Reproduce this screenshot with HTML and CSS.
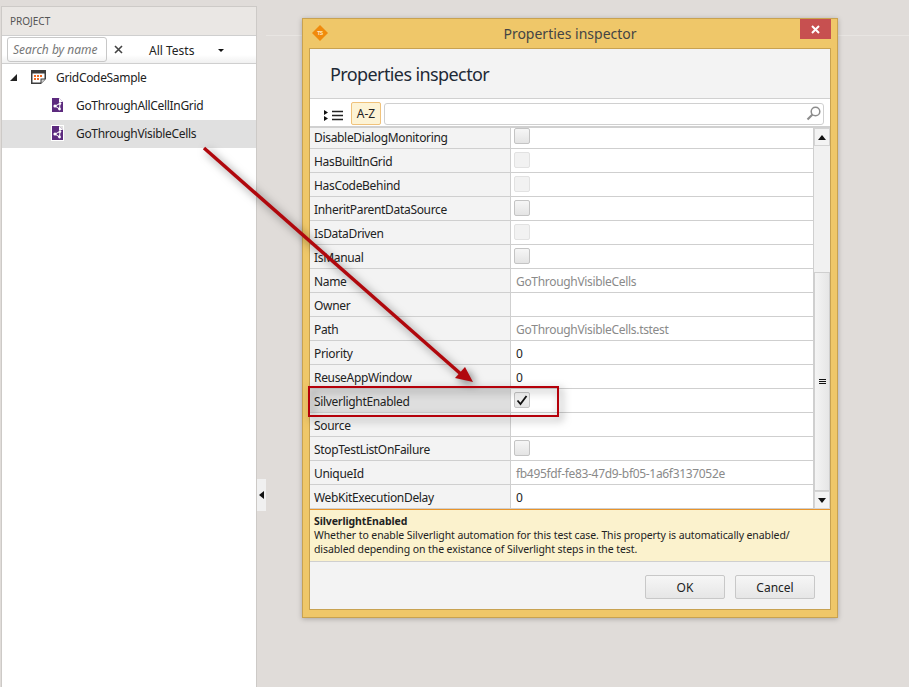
FILE: index.html
```html
<!DOCTYPE html>
<html lang="en">
  <head>
    <meta charset="UTF-8" />
    <title>Properties inspector</title>
    <link rel="stylesheet" href="styles.css">
  </head>
  <body>
    <div class="app">
      <aside class="project">
        <div class="project-head">PROJECT</div>
        <div class="filter">
          <div class="search-name">Search by name</div>
          <svg class="clear" width="9" height="9" viewBox="0 0 9 9"><path d="M1 1l7 7M8 1L1 8" stroke="#444" stroke-width="1.6" fill="none"/></svg>
          <div class="all-tests">All Tests</div>
          <div class="caret"></div>
        </div>
        <div class="tree-row root">
          <svg class="twist" width="9" height="9" viewBox="0 0 9 9"><path d="M8 1v7H1z" fill="#222"/></svg>
          <svg class="file-icon" width="15" height="14" viewBox="0 0 15 14">
            <path d="M0 0h15v9l-5 5H0z" fill="#3d3d3d"/>
            <path d="M1.500 3.500h12v5h-4v4h-8z" fill="#fff"/>
            <path d="M3 5h2v2H3zM6 5h2v2H6zM9 5h2v2H9zM3 8h2v2H3zM6 8h2v2H6z" fill="#f26a21"/>
            <path d="M10.500 13l3.500-3.500h-3.500z" fill="#cfcfcf"/>
          </svg>
          <span>GridCodeSample</span>
        </div>
        <div class="tree-row leaf">
          <svg class="file-icon" width="11" height="14" viewBox="0 0 11 14">
            <path d="M0 0h7l4 4v10H0z" fill="#5c2a7e"/>
            <path d="M7 0l4 4H7z" fill="#fff"/>
            <path d="M3 8L8 5.500 7.500 11z" stroke="#fff" stroke-width="1" fill="none"/>
            <circle cx="3" cy="8" r="1.600" fill="#fff"/><circle cx="8" cy="5.500" r="1.300" fill="#fff"/><circle cx="7.500" cy="11" r="1.400" fill="#fff"/>
          </svg>
          <span>GoThroughAllCellInGrid</span>
        </div>
        <div class="tree-row leaf selected">
          <svg class="file-icon framed" width="11" height="14" viewBox="0 0 11 14">
            <path d="M0 0h7l4 4v10H0z" fill="#5c2a7e"/>
            <path d="M7 0l4 4H7z" fill="#fff"/>
            <path d="M3 8L8 5.500 7.500 11z" stroke="#fff" stroke-width="1" fill="none"/>
            <circle cx="3" cy="8" r="1.600" fill="#fff"/><circle cx="8" cy="5.500" r="1.300" fill="#fff"/><circle cx="7.500" cy="11" r="1.400" fill="#fff"/>
          </svg>
          <span>GoThroughVisibleCells</span>
        </div>
      </aside>

      <div class="splitter">
        <div class="split-tab"><div class="split-arrow"></div></div>
      </div>

      <main class="workspace">
        <section class="dialog">
          <header class="titlebar">
            <svg class="logo" width="18" height="18" viewBox="0 0 18 18">
              <path d="M9 1l8 8-8 8-8-8z" fill="#f08a0c"/>
              <text x="9" y="11" text-anchor="middle" font-size="5" font-weight="bold" fill="#ffe9c4" font-family="Liberation Sans, sans-serif">TS</text>
            </svg>
            <div class="title">Properties inspector</div>
            <div class="close">
              <svg width="9" height="9" viewBox="0 0 9 9"><path d="M1 1l7 7M8 1L1 8" stroke="#fff" stroke-width="2" fill="none"/></svg>
            </div>
          </header>

          <div class="client">
            <div class="client-head">Properties inspector</div>

            <div class="toolbar">
              <svg class="sort-icon" width="19" height="11" viewBox="0 0 19 11">
                <path d="M0 0l4 2.500L0 5zM0 6l4 2.500L0 11z" fill="#111"/>
                <path d="M8 1.500h11M8 5.500h11M8 9.500h11" stroke="#222" stroke-width="1.500" fill="none"/>
              </svg>
              <div class="az">A-Z</div>
              <div class="filter-box">
                <svg width="15" height="15" viewBox="0 0 15 15">
                  <circle cx="9.500" cy="5.500" r="4.300" stroke="#8c8c8c" stroke-width="1.500" fill="none"/>
                  <path d="M6.500 8.500L1.500 13.500" stroke="#8c8c8c" stroke-width="2.200" fill="none"/>
                </svg>
              </div>
            </div>

            <div class="grid">
              <div class="rows">
                <div class="row"><div class="key">DisableDialogMonitoring</div><div class="val"><div class="check"></div></div></div>
                <div class="row"><div class="key">HasBuiltInGrid</div><div class="val"><div class="check off"></div></div></div>
                <div class="row"><div class="key">HasCodeBehind</div><div class="val"><div class="check off"></div></div></div>
                <div class="row"><div class="key">InheritParentDataSource</div><div class="val"><div class="check"></div></div></div>
                <div class="row"><div class="key">IsDataDriven</div><div class="val"><div class="check off"></div></div></div>
                <div class="row"><div class="key">IsManual</div><div class="val"><div class="check"></div></div></div>
                <div class="row"><div class="key">Name</div><div class="val muted">GoThroughVisibleCells</div></div>
                <div class="row"><div class="key">Owner</div><div class="val"></div></div>
                <div class="row"><div class="key">Path</div><div class="val muted">GoThroughVisibleCells.tstest</div></div>
                <div class="row"><div class="key">Priority</div><div class="val">0</div></div>
                <div class="row"><div class="key">ReuseAppWindow</div><div class="val">0</div></div>
                <div class="row current"><div class="key">SilverlightEnabled</div><div class="val"><div class="check">
                  <svg width="12" height="11" viewBox="0 0 12 11"><path d="M1.500 5.500l3 3.500 6-8" stroke="#111" stroke-width="1.800" fill="none"/></svg>
                </div></div></div>
                <div class="row"><div class="key">Source</div><div class="val"></div></div>
                <div class="row"><div class="key">StopTestListOnFailure</div><div class="val"><div class="check"></div></div></div>
                <div class="row"><div class="key">UniqueId</div><div class="val muted">fb495fdf-fe83-47d9-bf05-1a6f3137052e</div></div>
                <div class="row"><div class="key">WebKitExecutionDelay</div><div class="val">0</div></div>
              </div>
              <div class="scrollbar">
                <div class="sb-btn"><div class="tri-up"></div></div>
                <div class="sb-track"></div>
                <div class="sb-thumb"><div class="grip"></div></div>
                <div class="sb-btn"><div class="tri-down"></div></div>
              </div>
            </div>

            <div class="describe">
              <div class="describe-name">SilverlightEnabled</div>
              <div>Whether to enable Silverlight automation for this test case. This property is automatically enabled/<br>disabled depending on the existance of Silverlight steps in the test.</div>
            </div>

            <div class="actions">
              <div class="btn">OK</div>
              <div class="btn">Cancel</div>
            </div>
          </div>
        </section>
      </main>
    </div>

    <!-- callout drawn over the screenshot -->
    <svg class="callout" width="909" height="687" viewBox="0 0 909 687">
      <path d="M204 148L462 375" stroke="#b0080d" stroke-width="3.500" fill="none"/>
      <path d="M473 382L455 378 465 367z" fill="#b0080d"/>
      <rect x="309" y="387" width="249" height="29" stroke="#b5000a" stroke-width="2" fill="none"/>
    </svg>
  </body>
</html>
```

FILE: styles.css
```css
* {
  box-sizing: border-box;
}

body {
  margin: 0;
  background-color: #e0dcd9;
  font-family: "Noto Sans", sans-serif;
  font-size: 12px;
  letter-spacing: -0.32px;
  color: #222;
  overflow: hidden;
}

.app {
  display: flex;
  height: 687px;
  padding-left: 1px;
}

/* left tree */
.project {
  width: 256px;
  margin-top: 6px;
  background-color: #fff;
  border: 1px solid #cdcac7;
  border-bottom: none;
}

.project-head {
  height: 29px;
  padding: 0 8px;
  display: flex;
  align-items: center;
  background-color: #eae7e4;
  border-bottom: 1px solid #cfcfcf;
  font-size: 10px;
  letter-spacing: 0;
  color: #555;
}

.filter {
  height: 28px;
  display: flex;
  align-items: center;
  border-bottom: 1px solid #cfcfcf;
  background: linear-gradient(#fff 70%, #f0f0f0);
}

.search-name {
  width: 100px;
  height: 25px;
  margin-left: 5px;
  padding-left: 5px;
  line-height: 24px;
  border: 1px solid #c8c8c8;
  border-radius: 3px;
  font-style: italic;
  letter-spacing: 0;
  color: #777;
  white-space: nowrap;
}

.clear {
  margin-left: 7px;
}

.all-tests {
  margin: 2px 0 0 26px;
  width: 69px;
  letter-spacing: 0;
  color: #222;
}

.caret {
  width: 0;
  height: 0;
  margin-top: 2px;
  border-left: 3px solid transparent;
  border-right: 3px solid transparent;
  border-top: 3px solid #111;
}

.tree-row {
  height: 28px;
  display: flex;
  align-items: center;
  padding-bottom: 2px;
}

.tree-row.root {
  padding-left: 7px;
}

.twist {
  margin-right: 13px;
}

.tree-row.root .file-icon {
  margin-right: 10px;
}

.tree-row.leaf {
  padding-left: 50px;
}

.tree-row.leaf .file-icon {
  margin-right: 13px;
}

.selected {
  background-color: #e0e0e0;
}

.framed {
  outline: 1px solid #fff;
}

/* splitter */
.splitter {
  width: 9px;
  display: flex;
  flex-direction: column;
  justify-content: flex-end;
  padding-bottom: 176px;
}

.split-tab {
  height: 32px;
  display: flex;
  align-items: center;
  padding-left: 2px;
  background-color: #f0f0f0;
}

.split-arrow {
  width: 0;
  height: 0;
  border-top: 4px solid transparent;
  border-bottom: 4px solid transparent;
  border-right: 5px solid #111;
}

/* dialog */
.workspace {
  flex: 1;
  padding: 18px 0 0 36px;
  background: linear-gradient(#e8e5e2, #e8e5e2) no-repeat 0 35px / 100% 1px;
}

.dialog {
  width: 536px;
  height: 600px;
  display: flex;
  flex-direction: column;
  padding: 0 6px 7px;
  background-color: #efc769;
  border: 1px solid #c8a251;
  box-shadow: 0 1px 5px rgba(0, 0, 0, 0.25);
}

.titlebar {
  height: 29px;
  flex-shrink: 0;
  position: relative;
  display: flex;
  align-items: center;
  justify-content: center;
}

.logo {
  position: absolute;
  left: 2px;
  top: 5px;
}

.title {
  font-size: 14px;
  letter-spacing: 0;
  color: #444;
}

.close {
  position: absolute;
  right: 0;
  top: 0;
  width: 31px;
  height: 20px;
  display: flex;
  align-items: center;
  justify-content: center;
  background-color: #c75050;
}

.client {
  flex: 1;
  display: flex;
  flex-direction: column;
  background-color: #f3f3f3;
  border: 1px solid #c8a251;
}

.client-head {
  height: 50px;
  padding-left: 20px;
  display: flex;
  align-items: center;
  font-size: 18px;
  letter-spacing: -0.6px;
  color: #1e2a36;
  border-bottom: 1px solid #d0d0d0;
}

.toolbar {
  height: 29px;
  display: flex;
  align-items: center;
  padding: 2px 6px 0 14px;
  background-color: #fff;
  border-bottom: 2px solid #d0d0d0;
}

.sort-icon {
  margin: 3px 8px 0 0;
}

.az {
  width: 30px;
  height: 23px;
  margin-right: 3px;
  display: flex;
  align-items: center;
  justify-content: center;
  background-color: #fdf3d5;
  border: 1px solid #f0c27b;
  border-radius: 2px;
  letter-spacing: 0;
}

.filter-box {
  flex: 1;
  height: 22px;
  display: flex;
  align-items: center;
  justify-content: flex-end;
  padding-right: 2px;
  border: 1px solid #d0d0d0;
  border-radius: 3px;
}

.grid {
  height: 381px;
  display: flex;
  overflow: hidden;
  background-color: #fff;
}

.rows {
  flex: 1;
  margin-top: -3px;
}

.row {
  height: 24px;
  display: flex;
  border-bottom: 1px solid #cfcfcf;
}

.key {
  width: 201px;
  padding-left: 4px;
  line-height: 25px;
  background-color: #f3f3f3;
  border-right: 1px solid #cfcfcf;
  white-space: nowrap;
}

.current .key {
  background-color: #dedede;
}

.val {
  flex: 1;
  display: flex;
  align-items: center;
  padding: 1px 0 0 5px;
}

.muted {
  color: #8a8a8a;
}

.check {
  width: 16px;
  height: 16px;
  margin: -2px 0 0 -2px;
  display: flex;
  align-items: center;
  justify-content: center;
  background: linear-gradient(#f6f6f6, #e4e4e4);
  border: 1px solid #c4c4c4;
  border-radius: 2px;
}

.check.off {
  background: #f2f2f2;
  border-color: #e2e2e2;
}

.scrollbar {
  width: 17px;
  display: flex;
  flex-direction: column;
  background-color: #f1f1f1;
  border-left: 1px solid #cfcfcf;
}

.sb-btn {
  height: 18px;
  display: flex;
  align-items: center;
  justify-content: center;
  background-color: #f3f3f3;
  border: 1px solid #d4d4d4;
}

.sb-track {
  flex: 1;
}

.sb-thumb {
  height: 219px;
  display: flex;
  align-items: center;
  justify-content: center;
  background: linear-gradient(90deg, #f4f4f4, #e6e6e6);
  border: 1px solid #cfcfcf;
}

.grip {
  width: 7px;
  height: 5px;
  border-top: 1px solid #111;
  border-bottom: 1px solid #111;
  background: linear-gradient(transparent 1px, #111 1px, #111 2px, transparent 2px);
}

.tri-up,
.tri-down {
  width: 0;
  height: 0;
  border-left: 4px solid transparent;
  border-right: 4px solid transparent;
}

.tri-up {
  border-bottom: 5px solid #111;
}

.tri-down {
  border-top: 5px solid #111;
}

.describe {
  height: 53px;
  padding: 4px 4px 0;
  background-color: #fbf2cd;
  border-top: 1px solid #e8942a;
  border-bottom: 1px solid #cfcfcf;
  font-size: 10.5px;
  line-height: 14px;
  letter-spacing: -0.09px;
}

.describe-name {
  font-weight: bold;
}

.actions {
  flex: 1;
  display: flex;
  justify-content: flex-end;
  gap: 10px;
  padding: 13px 15px 0 0;
}

.btn {
  width: 80px;
  height: 24px;
  display: flex;
  align-items: center;
  justify-content: center;
  background: linear-gradient(#f6f6f6, #e6e6e6);
  border: 1px solid #c8c8c8;
  border-radius: 2px;
  letter-spacing: 0;
}

.callout {
  position: absolute;
  left: 0;
  top: 0;
  filter: drop-shadow(3px 3px 4px rgba(0, 0, 0, 0.5));
}
```
